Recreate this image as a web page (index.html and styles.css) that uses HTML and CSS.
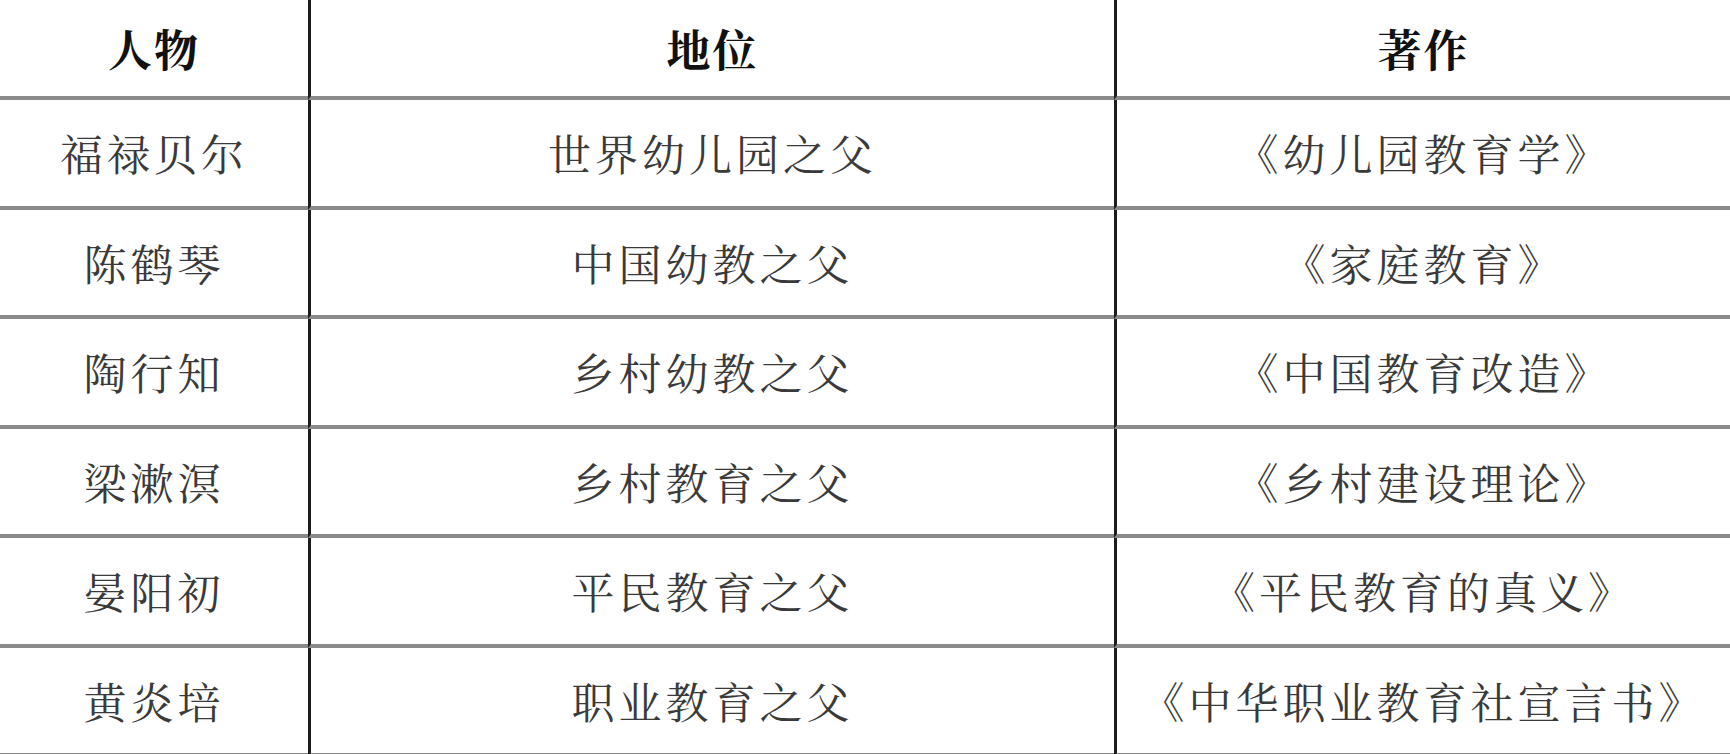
FILE: index.html
```html
<!DOCTYPE html>
<html lang="zh-CN">
<head>
<meta charset="utf-8">
<title>教育家</title>
<link rel="stylesheet" href="styles.css">
</head>
<body>
<table class="edu">
  <colgroup>
    <col class="c1">
    <col class="c2">
    <col class="c3">
  </colgroup>
  <thead>
    <tr><th>人物</th><th>地位</th><th>著作</th></tr>
  </thead>
  <tbody>
    <tr><td>福禄贝尔</td><td>世界幼儿园之父</td><td>《幼儿园教育学》</td></tr>
    <tr><td>陈鹤琴</td><td>中国幼教之父</td><td>《家庭教育》</td></tr>
    <tr><td>陶行知</td><td>乡村幼教之父</td><td>《中国教育改造》</td></tr>
    <tr><td>梁漱溟</td><td>乡村教育之父</td><td>《乡村建设理论》</td></tr>
    <tr><td>晏阳初</td><td>平民教育之父</td><td>《平民教育的真义》</td></tr>
    <tr><td>黄炎培</td><td>职业教育之父</td><td>《中华职业教育社宣言书》</td></tr>
  </tbody>
</table>
</body>
</html>
```

FILE: styles.css
```css
html, body {
  margin: 0;
  padding: 0;
  background: #ffffff;
  overflow: hidden;
}

.edu {
  width: 1730px;
  border-collapse: separate;
  border-spacing: 0;
  table-layout: fixed;
  font-family: "Noto Serif CJK SC", "Noto Sans CJK SC", serif;
}

.c1 { width: 308px; }
.c2 { width: 806px; }
.c3 { width: 616px; }

.edu th,
.edu td {
  padding: 0;
  text-align: center;
  vertical-align: middle;
  border-bottom: 4px solid #8a8a8a;
}

.edu th + th,
.edu td + td {
  border-left: 3px solid #1c1c1c;
}

.edu th {
  height: 96px;
  font-size: 44px;
  font-weight: 700;
  color: #111111;
  letter-spacing: 2px;
}

.edu td {
  height: 105.5px;
  font-size: 43px;
  font-weight: 400;
  color: #3a3a3a;
  letter-spacing: 4px;
}
```
